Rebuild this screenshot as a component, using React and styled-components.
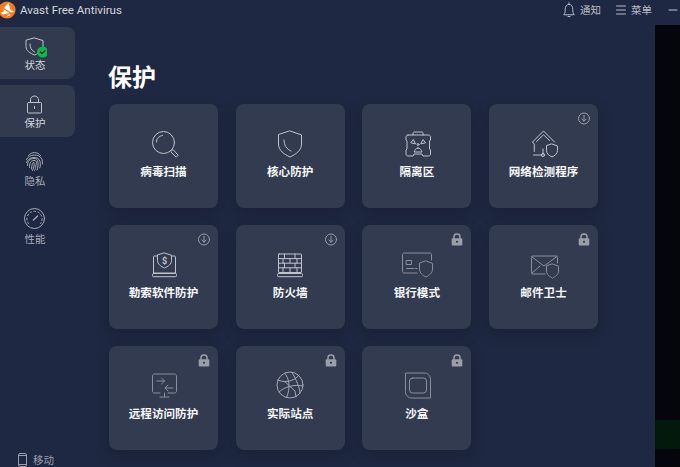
import React from "react";
import styled, { createGlobalStyle } from "styled-components";

const Global = createGlobalStyle`
  html, body { margin: 0; padding: 0; background: #1f2842; overflow: hidden; }
  * { box-sizing: border-box; }
`;
const FONT = `"Noto Sans CJK SC", "Noto Sans", sans-serif`;

const Page = styled.div`
  width: 680px; height: 467px; display: flex; flex-direction: column;
  background: #1f2842; font-family: ${FONT}; overflow: hidden;
`;
const Header = styled.header`
  height: 25px; flex: none; display: flex; align-items: flex-start; padding-top: 2px; color: #c4c7cf;
`;
const Brand = styled.div`
  display: flex; align-items: center; gap: 4px; height: 16px;
  font: 11.55px/16px Roboto, sans-serif; color: #d5d7dc;
`;
const HeaderTools = styled.div`
  margin-left: auto; display: flex; align-items: center; height: 16px; padding-right: 2px;
`;
const Tool = styled.div`
  display: flex; align-items: center; gap: ${p => p.$gap}px; margin-right: ${p => p.$mr}px;
  font-size: 10.5px; line-height: 16px; color: #b9bcc6;
`;
const Body = styled.div`flex: 1; display: flex; min-height: 0;`;
const Sidebar = styled.nav`
  width: 75px; flex: none; display: flex; flex-direction: column; gap: 6px; padding-top: 2px;
`;
const NavItem = styled.div`
  height: 52px; display: flex; flex-direction: column; align-items: center; padding: 7px 5px 0 0;
  border-radius: 0 8px 8px 0; background: ${p => (p.$on ? "#323a4f" : "transparent")};
  font-size: 10.5px; line-height: 14px; color: ${p => (p.$on ? "#d3d5db" : "#a9adb9")};
`;
const MobileLink = styled.div`
  margin-top: auto; height: 14px; display: flex; align-items: center; gap: 6px; padding-left: 18px;
  font-size: 10.5px; line-height: 14px; color: #9a9eac;
`;
const Main = styled.main`flex: 1; padding: 35px 0 0 34px;`;
const Title = styled.h1`
  margin: 0 0 12px -1px; font-size: 24px; line-height: 32px; font-weight: 700; color: #fff;
`;
const Grid = styled.div`
  display: grid; grid-template-columns: repeat(4, 109px); grid-auto-rows: 103.6px; gap: 17.5px 17.7px;
`;
const Card = styled.div`
  position: relative; display: flex; flex-direction: column; align-items: center; padding-top: 25px;
  background: #333b50; border-radius: 8px; box-shadow: 0 5px 14px rgba(10, 14, 30, .28);
`;
const Label = styled.div`
  margin-top: 3px; font-size: 11.6px; line-height: 14px; font-weight: 700; color: #f6f7f8;
`;
const Badge = styled.div`
  position: absolute; top: 8px; right: 8px; width: 12px; height: 13px; display: flex;
`;
const DarkPanel = styled.div`
  width: 25px; flex: none; background: #04060b; padding-top: 395px;
`;
const GreenStrip = styled.div`height: 29px; background: #021a0c;`;

const Svg = styled.svg.attrs(p => ({
  width: p.$w ?? 32, height: p.$h ?? 32, viewBox: `0 0 ${p.$w ?? 32} ${p.$h ?? 32}`,
}))`
  flex: none; display: block; fill: none; stroke: ${p => p.$c ?? "#c0c3cb"};
  stroke-width: 1; stroke-linecap: round; stroke-linejoin: round;
`;

const shield = (l, t, w, h) => {
  const r = l + w, m = l + w / 2, b = t + h, s = t + h * 0.15, c = t + h * 0.5;
  return `M${m} ${t}L${r} ${s}V${c}C${r} ${t + h * .75} ${m + w * .25} ${t + h * .9} ${m} ${b}C${m - w * .25} ${t + h * .9} ${l} ${t + h * .75} ${l} ${c}V${s}Z`;
};

const Logo = () => (
  <svg width="16" height="18" viewBox="0 0 16 18" style={{ display: "block", flex: "none" }}>
    <circle cx="7" cy="9" r="8.6" fill="#f47b20" />
    <path d="M8.5 1.8 10.6 9.2 14.8 10.4 11 11.4 4 6.9ZM3.2 8 9.5 12 3 13.6 .6 11.4 4.2 10.8ZM9.3 13 11 14 6 15.8Z" fill="#fff" />
  </svg>
);

const Bell = () => (
  <Svg $w={12} $h={16} $c="#b9bcc6">
    <path d="M1 12.5C2.2 11.4 2.2 9.5 2.2 7.5C2.2 4.5 3.6 2.4 6 2.4S9.8 4.5 9.8 7.5C9.8 9.5 9.8 11.4 11 12.5Z" />
    <path d="M6 .8V2.4M5 14.5H7" />
  </Svg>
);
const Burger = () => (
  <Svg $w={10} $h={16} $c="#b9bcc6"><path d="M.5 4H9.5M.5 8H9.5M.5 12H9.5" /></Svg>
);
const Minus = () => (
  <Svg $w={10} $h={16} $c="#c4c7cf"><path d="M1 8H9" /></Svg>
);

const StatusIcon = () => (
  <Svg $w={24} $h={24}>
    <path d={shield(3, 4, 17, 17)} />
    <path d="M7 10C7 14 8.5 16.5 11.5 18" />
    <circle cx="19.7" cy="18" r="5.6" fill="#12b84b" stroke="none" />
    <path d="M17.4 18 19 19.6 22 16.6" stroke="#123" strokeWidth="1.1" />
  </Svg>
);
const LockNav = () => (
  <Svg $w={24} $h={24}>
    <rect x="4.5" y="10.5" width="14" height="10.5" rx="1" />
    <path d="M7.5 10.5V8C7.5 5.5 9.2 4 11.5 4S15.5 5.5 15.5 8V10.5M11.5 14.5V16.5" />
  </Svg>
);
const Finger = () => (
  <Svg $w={24} $h={24} $c="#a9adb9">
    <path d="M5.5 5.5C8.5 1.5 14.5 1.5 17.5 5.5" />
    <path d="M3.5 9.5C5.5 4 16.5 3 19 9.5C19.6 11.5 19.5 13 19.4 14" />
    <path d="M3.5 12.5C4.5 7 15.5 5 17 11.5C17.5 14 17.5 16 16.8 18" />
    <path d="M4.5 15.5C4.5 11 7 8.5 11 8.5S15 11.5 15 14 14.8 18 14 20" />
    <path d="M6.5 17.5C6.5 14 7 10.5 11 10.5S13 14 12.8 16 12.5 19 11.5 20.5" />
    <path d="M8.5 19C9 16 8.8 12.5 11 12.5 11.4 15 11 18 9.5 20.5" />
  </Svg>
);
const Gauge = () => (
  <Svg $w={24} $h={24} $c="#a9adb9">
    <circle cx="11.5" cy="10.5" r="10" />
    <path d="M5.5 15.5A7.6 7.6 0 1 1 17.5 15.5" strokeDasharray="1.6 2.4" />
    <path d="M10.4 12 14.6 8" strokeWidth="1.3" />
  </Svg>
);
const Phone = () => (
  <Svg $w={9} $h={14} $c="#9a9eac">
    <rect x=".5" y=".5" width="8" height="13" rx="1.4" />
    <path d="M.5 2.5H8.5M.5 11.5H8.5" />
  </Svg>
);

const DownloadBadge = () => (
  <Svg $w={12} $h={13} $c="#979ca9">
    <circle cx="6" cy="6.5" r="5.5" />
    <path d="M6 3.4V9.2M3.8 7 6 9.2 8.2 7" />
  </Svg>
);
const LockBadge = () => (
  <Svg $w={12} $h={13} $c="#9a9ea9">
    <path d="M3 5.5V3.7C3 2 4.3 1 6 1S9 2 9 3.7V5.5" strokeWidth="1.5" />
    <rect x=".7" y="5.2" width="10.6" height="7.3" rx="1" fill="#9a9ea9" stroke="none" />
    <circle cx="6" cy="8.8" r="1.1" fill="#333a4f" stroke="none" />
  </Svg>
);

const icons = {
  scan: c => (
    <Svg $c={c}>
      <circle cx="15.5" cy="13.5" r="11" />
      <path d="M8.5 13C8.5 9.5 11 7 14.5 6.5" />
      <path d="M23.5 22 25 20.5 30.2 26.2 28.2 28.2 23 23" />
    </Svg>
  ),
  core: c => (
    <Svg $c={c}>
      <path d={shield(4.5, 2, 23, 26)} />
      <path d="M10 11C10 16.5 12.5 20 17 22" />
    </Svg>
  ),
  vault: c => (
    <Svg $c={c}>
      <path d="M7 6H27.5C28.6 6 29.5 6.9 29.5 8V11L28.5 12V20L29.5 21V25C29.5 26.1 28.6 27 27.5 27H22L21 25H13L12 27H7C5.9 27 5 26.1 5 25V21L6 20V12L5 11V8C5 6.9 5.9 6 7 6Z" />
      <path d="M12 6V4.2C12 3.5 12.5 3 13.2 3H21C21.7 3 22 3.5 22 4.2V6" />
      <path d="M10 13.5 12.3 10.5 14.3 14.5ZM20 14.5 22 10.5 24.3 13.5ZM17 19C19 19 20.5 21 21 23H13.2C13.7 21 15 19 17 19Z" />
      <circle cx="17" cy="15.5" r="1" />
    </Svg>
  ),
  net: c => (
    <Svg $c={c}>
      <path d="M4.5 13 15.5 2 26.5 13" />
      <path d="M8.5 12.5 15.5 5.8 21.5 11.5" />
      <path d="M4.5 13 6.3 15V22.5" />
      <path d="M5.5 26H13.5" />
      <path d="M15 26V20" />
      <circle cx="15" cy="26" r="1.6" />
      <path d={shield(18.5, 15, 11, 13)} />
    </Svg>
  ),
  ransom: c => (
    <Svg $c={c}>
      <path d="M9.5 6H6.5C5.9 6 5.5 6.4 5.5 7V23H27.5V7C27.5 6.4 27.1 6 26.5 6H23.5" />
      <rect x="4.5" y="23.5" width="24" height="3.2" rx="1" />
      <path d={shield(9.5, 3, 14, 15)} />
      <text x="16.5" y="13.5" fontSize="9" fontWeight="700" fill={c ?? "#c0c3cb"} stroke="none" textAnchor="middle" fontFamily="Roboto, sans-serif">$</text>
    </Svg>
  ),
  wall: c => (
    <Svg $c={c}>
      <rect x="4.5" y="4" width="23" height="18.5" rx=".5" />
      <path d="M4.5 8.6H27.5M4.5 13.2H27.5M4.5 17.8H27.5M10.5 4V8.6M21 4V8.6M16 8.6V13.2M9 8.6V13.2M23 8.6V13.2M10.5 13.2V17.8M21 13.2V17.8M16 17.8V22.5M9 17.8V22.5M23 17.8V22.5" />
      <rect x="3.5" y="23.5" width="25" height="3.2" rx="1" />
    </Svg>
  ),
  bank: c => (
    <Svg $c={c}>
      <path d="M16 23H3C2.2 23 1.5 22.3 1.5 21.5V4.5C1.5 3.7 2.2 3 3 3H29C29.8 3 30.5 3.7 30.5 4.5V10" />
      <rect x="5.5" y="10.5" width="5" height="4" />
      <path d="M5.5 18.5H13M14.5 18.5H16" />
      <path d={shield(18.5, 11, 13, 16)} />
    </Svg>
  ),
  mail: c => (
    <Svg $c={c}>
      <path d="M17 24H5C4 24 3.5 23.5 3.5 22.5V7.5C3.5 6.5 4 6 5 6H28C29 6 29.5 6.5 29.5 7.5V13" />
      <path d="M3.5 6.5 16 16 29 6.5M3.5 23.5 12 16" />
      <path d={shield(18.5, 14, 12, 14)} />
    </Svg>
  ),
  remote: c => (
    <Svg $c={c}>
      <path d="M12 22H6.5C5.4 22 4.5 21.1 4.5 20V5C4.5 3.9 5.4 3 6.5 3H26.5C27.6 3 28.5 3.9 28.5 5V20C28.5 21.1 27.6 22 26.5 22H20" />
      <path d="M16.5 22V26M12 26H21" />
      <path d="M9 10H16.5M13.5 7 16.5 10 13.5 13" />
      <path d="M25 17H17M20 14 17 17 20 20" />
    </Svg>
  ),
  globe: c => (
    <Svg $c={c}>
      <circle cx="16" cy="14" r="13" />
      <path d="M4 9C10 12 20 11 25 4" />
      <path d="M11 2.5C15 7 17 17 12.5 26.5" />
      <path d="M18 1.5C22 8 26 17 26 22" />
      <path d="M5 21C10 16 20 13 29 15" />
      <path d="M11 10.8 21 20 22 26" />
    </Svg>
  ),
  sandbox: c => (
    <Svg $c={c}>
      <path d="M5 2H23C26.9 2 29.5 4.6 29.5 8.5V27H11C7.1 27 4.5 24.4 4.5 20.5V2.5Z" />
      <rect x="8.5" y="7" width="17" height="15" rx="3" />
    </Svg>
  ),
};

const DIM = "#8a8f9c";
const MID = "#a4a8b3";
const cards = [
  { name: "病毒扫描", icon: "scan" },
  { name: "核心防护", icon: "core" },
  { name: "隔离区", icon: "vault" },
  { name: "网络检测程序", icon: "net", badge: "down" },
  { name: "勒索软件防护", icon: "ransom", badge: "down" },
  { name: "防火墙", icon: "wall", badge: "down" },
  { name: "银行模式", icon: "bank", badge: "lock", tone: DIM },
  { name: "邮件卫士", icon: "mail", badge: "lock", tone: DIM },
  { name: "远程访问防护", icon: "remote", badge: "lock", tone: DIM },
  { name: "实际站点", icon: "globe", badge: "lock", tone: MID },
  { name: "沙盒", icon: "sandbox", badge: "lock", tone: DIM },
];

export default function App() {
  return (
    <Page>
      <Global />
      <Header>
        <Brand><Logo />Avast Free Antivirus</Brand>
        <HeaderTools>
          <Tool $gap={5} $mr={15}><Bell />通知</Tool>
          <Tool $gap={5} $mr={16}><Burger />菜单</Tool>
          <Minus />
        </HeaderTools>
      </Header>
      <Body>
        <Sidebar>
          <NavItem $on><StatusIcon />状态</NavItem>
          <NavItem $on><LockNav />保护</NavItem>
          <NavItem><Finger />隐私</NavItem>
          <NavItem><Gauge />性能</NavItem>
          <MobileLink><Phone />移动</MobileLink>
        </Sidebar>
        <Main>
          <Title>保护</Title>
          <Grid>
            {cards.map(c => (
              <Card key={c.name}>
                {c.badge && <Badge>{c.badge === "lock" ? <LockBadge /> : <DownloadBadge />}</Badge>}
                {icons[c.icon](c.tone)}
                <Label>{c.name}</Label>
              </Card>
            ))}
          </Grid>
        </Main>
        <DarkPanel><GreenStrip /></DarkPanel>
      </Body>
    </Page>
  );
}
